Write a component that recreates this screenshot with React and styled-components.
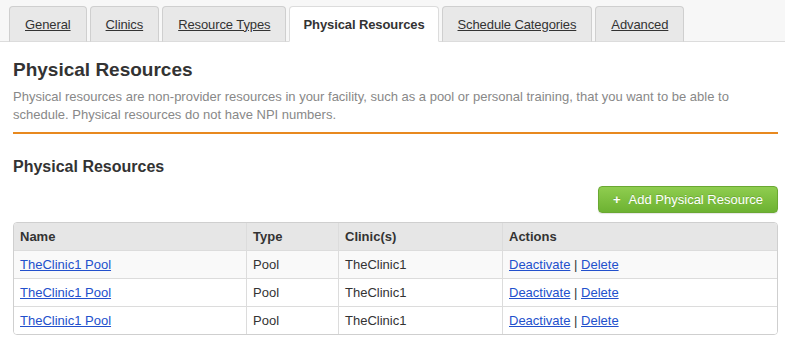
import React from "react";
import styled, { createGlobalStyle } from "styled-components";

const GlobalStyle = createGlobalStyle`
  body {
    margin: 0;
    background: #fff;
    font-family: "Liberation Sans", Arial, sans-serif;
    color: #333;
  }
`;

const TabBar = styled.div`
  display: flex;
  gap: 3px;
  align-items: flex-end;
  height: 42px;
  padding-left: 9px;
  background: #f7f7f7;
  border-bottom: 1px solid #dcdcdc;
  box-sizing: border-box;
`;

const Tab = styled.a`
  display: flex;
  align-items: center;
  height: 36px;
  padding: 0 ${(p) => (p.active ? "13px" : "15px")};
  margin-bottom: -1px;
  box-sizing: border-box;
  border: 1px solid ${(p) => (p.active ? "#dcdcdc" : "#cfcfcf")};
  border-bottom: ${(p) => (p.active ? "1px solid #fff" : "1px solid #dcdcdc")};
  border-radius: 4px 4px 0 0;
  background: ${(p) => (p.active ? "#fff" : "#e8e8e8")};
  font-size: 13px;
  letter-spacing: -0.1px;
  font-weight: ${(p) => (p.active ? "bold" : "normal")};
  color: #333;
  text-decoration: ${(p) => (p.active ? "none" : "underline")};
`;

const Content = styled.div`
  padding: 16px 7px 0 13px;
`;

const Title = styled.h1`
  margin: 0;
  font-size: 19px;
  line-height: 24px;
  font-weight: bold;
  color: #333;
`;

const Description = styled.p`
  margin: 6px 0 0;
  font-size: 13px;
  line-height: 18px;
  color: #888;
`;

const Divider = styled.div`
  height: 2px;
  margin-top: 8px;
  background: #e8891f;
`;

const SubTitle = styled.h2`
  margin: 23px 0 0;
  font-size: 16px;
  line-height: 20px;
  font-weight: bold;
  color: #333;
`;

const Toolbar = styled.div`
  display: flex;
  justify-content: flex-end;
  margin-top: 9px;
`;

const AddButton = styled.button`
  height: 27px;
  padding: 0 14px;
  border: 1px solid #6aa832;
  border-radius: 4px;
  background: linear-gradient(#8fcd4f, #6db232);
  color: #fff;
  font-family: "Liberation Sans", Arial, sans-serif;
  font-size: 13px;
  text-shadow: 0 -1px 0 rgba(0, 0, 0, 0.15);
  box-shadow: 0 1px 1px rgba(0, 0, 0, 0.1);
  span {
    margin-right: 8px;
    font-weight: bold;
  }
`;

const Table = styled.table`
  width: 100%;
  margin-top: 9px;
  border-collapse: separate;
  border-spacing: 0;
  border: 1px solid #cfcfcf;
  border-radius: 4px;
  overflow: hidden;
  font-size: 13px;
`;

const Th = styled.th`
  height: 27px;
  padding: 0 6px;
  text-align: left;
  font-weight: bold;
  background: #e6e6e6;
  border-left: ${(p) => (p.first ? "none" : "1px solid #dcdcdc")};
  width: ${(p) => p.w || "auto"};
  box-sizing: border-box;
`;

const Row = styled.tr`
  background: ${(p) => (p.striped ? "#f9f9f9" : "#fff")};
`;

const Td = styled.td`
  height: 27px;
  padding: 0 6px;
  border-top: 1px solid #dcdcdc;
  border-left: ${(p) => (p.first ? "none" : "1px solid #dcdcdc")};
  color: #333;
`;

const Link = styled.a`
  color: #2250cc;
  text-decoration: underline;
`;

const tabs = [
  "General",
  "Clinics",
  "Resource Types",
  "Physical Resources",
  "Schedule Categories",
  "Advanced",
];

const rows = [1, 2, 3];

export default () => {
  return (
    <>
      <GlobalStyle />
      <TabBar>
        {tabs.map((t) => (
          <Tab key={t} active={t === "Physical Resources"}>
            {t}
          </Tab>
        ))}
      </TabBar>
      <Content>
        <Title>Physical Resources</Title>
        <Description>
          Physical resources are non-provider resources in your facility, such
          as a pool or personal training, that you want to be able to
          schedule. Physical resources do not have NPI numbers.
        </Description>
        <Divider />
        <SubTitle>Physical Resources</SubTitle>
        <Toolbar>
          <AddButton>
            <span>+</span>Add Physical Resource
          </AddButton>
        </Toolbar>
        <Table>
          <thead>
            <tr>
              <Th first w="232px">Name</Th>
              <Th w="92px">Type</Th>
              <Th w="164px">Clinic(s)</Th>
              <Th>Actions</Th>
            </tr>
          </thead>
          <tbody>
            {rows.map((r) => (
              <Row key={r} striped={r === 1}>
                <Td first>
                  <Link>TheClinic1 Pool</Link>
                </Td>
                <Td>Pool</Td>
                <Td>TheClinic1</Td>
                <Td>
                  <Link>Deactivate</Link> | <Link>Delete</Link>
                </Td>
              </Row>
            ))}
          </tbody>
        </Table>
      </Content>
    </>
  );
};
